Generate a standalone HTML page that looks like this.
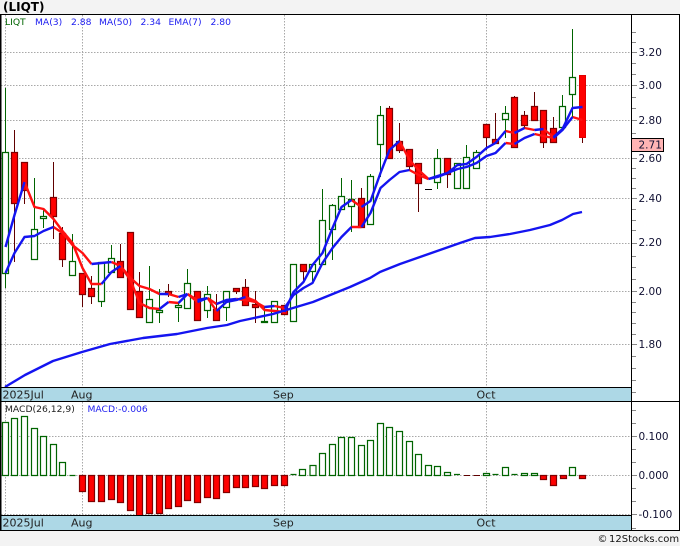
<!DOCTYPE html>
<html><head><meta charset="utf-8"><title>LIQT</title>
<style>
html,body{margin:0;padding:0;background:#f3f3f3}
svg{display:block}
text{font-family:"DejaVu Sans","Liberation Sans",sans-serif}
</style></head>
<body>
<svg xmlns="http://www.w3.org/2000/svg" width="680" height="546" viewBox="0 0 680 546">
<rect width="680" height="546" fill="#f3f3f3"/>
<rect x="0" y="14" width="680" height="517" fill="#fff"/>
<!-- grid -->
<path fill="none" stroke="#a8a8a8" stroke-dasharray="1.5 1.5" d="M1 52.5H631M1 85.5H631M1 120.5H631M1 158.5H631M1 198.5H631M1 243.5H631M1 291.5H631M1 344.5H631M5.5 15V387M82.5 15V387M284.5 15V387M486.5 15V387M1 436.5H631M1 475.5H631M1 514.5H631M5.5 402V515M82.5 402V515M284.5 402V515M486.5 402V515"/>
<!-- wicks -->
<path fill="none" stroke="#006400" d="M5.5 88V288M34.5 178V259M43.5 209V228M72.5 234V261M101.5 262V307M111.5 245V272M149.5 266V322M159.5 289V323M178.5 303V322M187.5 269V308M207.5 286V318M226.5 291V321M264.5 307V323M312.5 264V281M322.5 189V264M332.5 204V260M341.5 178V209M351.5 180V232M370.5 174V224M380.5 106V177M437.5 149V189M466.5 145V157M476.5 150V168M505.5 106V138M562.5 95V127M572.5 29V117"/>
<path fill="none" stroke="#600000" d="M14.5 130V262M24.5 162V204M53.5 162V239M62.5 227V267M82.5 273V307M91.5 276V304M120.5 244V277M139.5 272V317M168.5 284V297M216.5 294V320M236.5 288V294M245.5 279V305M255.5 291V323M303.5 264V282M361.5 188V227M389.5 106V158M399.5 123V153M409.5 149V171M418.5 163V212M447.5 158V188M486.5 124V150M495.5 113V143M514.5 96V147M524.5 111V128M534.5 92V106M543.5 110V148M553.5 117V142M582.5 75V143"/>
<!-- green bodies -->
<path fill="#fff" stroke="#006400" stroke-width="1.2" d="M2.5 152.5h6V273.5h-6zM31.5 229.5h6V259.5h-6zM40.5 216.5h6V218.5h-6zM69.5 261.5h6V275.5h-6zM98.5 262.5h6V301.5h-6zM108.5 258.5h6V272.5h-6zM146.5 299.5h6V322.5h-6zM156.5 310.5h6V312.5h-6zM175.5 305.5h6V307.5h-6zM184.5 283.5h6V308.5h-6zM204.5 294.5h6V310.5h-6zM223.5 291.5h6V307.5h-6zM261.5 321.5h6V322.5h-6zM271.5 301.5h6V322.5h-6zM290.5 264.5h6V321.5h-6zM309.5 264.5h6V271.5h-6zM319.5 220.5h6V264.5h-6zM329.5 205.5h6V229.5h-6zM338.5 196.5h6V209.5h-6zM348.5 199.5h6V206.5h-6zM367.5 176.5h6V224.5h-6zM377.5 115.5h6V144.5h-6zM434.5 158.5h6V182.5h-6zM454.5 163.5h6V188.5h-6zM463.5 157.5h6V188.5h-6zM473.5 152.5h6V168.5h-6zM502.5 113.5h6V119.5h-6zM559.5 106.5h6V127.5h-6zM569.5 77.5h6V94.5h-6z"/>
<!-- red bodies -->
<path fill="#f00" stroke="#800000" stroke-width="1.2" d="M11.5 152.5h6V203.5h-6zM21.5 162.5h6V190.5h-6zM50.5 197.5h6V216.5h-6zM59.5 233.5h6V259.5h-6zM79.5 273.5h6V294.5h-6zM88.5 288.5h6V296.5h-6zM117.5 261.5h6V277.5h-6zM127.5 232.5h6V309.5h-6zM136.5 291.5h6V317.5h-6zM165.5 291.5h6V294.5h-6zM194.5 291.5h6V320.5h-6zM213.5 309.5h6V320.5h-6zM233.5 288.5h6V291.5h-6zM242.5 287.5h6V305.5h-6zM252.5 304.5h6V307.5h-6zM281.5 305.5h6V314.5h-6zM300.5 264.5h6V271.5h-6zM358.5 198.5h6V227.5h-6zM386.5 108.5h6V158.5h-6zM396.5 141.5h6V150.5h-6zM406.5 149.5h6V166.5h-6zM415.5 163.5h6V183.5h-6zM444.5 158.5h6V174.5h-6zM483.5 124.5h6V137.5h-6zM492.5 139.5h6V143.5h-6zM511.5 97.5h6V147.5h-6zM521.5 115.5h6V125.5h-6zM531.5 106.5h6V120.5h-6zM540.5 110.5h6V142.5h-6zM550.5 128.5h6V142.5h-6z"/>
<path fill="#f00" stroke="#e00000" d="M579.5 75.5h6V137.5h-6z"/>
<path fill="none" stroke="#000" d="M425 189.5H432"/>
<!-- MA lines -->
<g fill="none" stroke-width="2.4" stroke-linejoin="round">
<path stroke="#ff1010" d="M53.5 227L62.5 233L72.5 245L82.5 253L91.5 264M111.5 262L120.5 266L130.5 278L139.5 286L149.5 289L159.5 294M168.5 294L178.5 297M187.5 294L197.5 300M207.5 298L216.5 304M236.5 299L245.5 300L255.5 302L264.5 307M274.5 306L284.5 308M351.5 227L361.5 227M409.5 170L418.5 175L428.5 179M505.5 143L514.5 144M534.5 134L543.5 136L553.5 138M572.5 117L582.5 120"/>
<path stroke="#ff1010" d="M24.5 182L34.5 207L43.5 209L53.5 219L62.5 231L72.5 243L82.5 268L91.5 284L101.5 284M120.5 266L130.5 280L139.5 303L149.5 308L159.5 309M168.5 302L178.5 303M187.5 294L197.5 302M207.5 298L216.5 311M245.5 297L255.5 301L264.5 310L274.5 311L284.5 312M351.5 200L361.5 207M399.5 141L409.5 160L418.5 170L428.5 179M505.5 131L514.5 133M524.5 128L534.5 130M543.5 129L553.5 137"/>
<path stroke="#1414f0" d="M5.5 273L14.5 253L24.5 237L34.5 236L43.5 231L53.5 227M91.5 264L101.5 263L111.5 262M159.5 294L168.5 294M178.5 297L187.5 294M197.5 300L207.5 298M216.5 304L226.5 300L236.5 299M264.5 307L274.5 306M284.5 308L293.5 295L303.5 288L312.5 283L322.5 263L332.5 248L341.5 237L351.5 227M361.5 227L370.5 213L380.5 188L389.5 180L399.5 172L409.5 170M428.5 179L437.5 176L447.5 173L457.5 169L466.5 167L476.5 163L486.5 156L495.5 153L505.5 143M514.5 144L524.5 138L534.5 134M553.5 138L562.5 130L572.5 117"/>
<path stroke="#1414f0" d="M5.5 247L14.5 215L24.5 182M101.5 284L111.5 272L120.5 266M159.5 309L168.5 302M178.5 303L187.5 294M197.5 302L207.5 298M216.5 311L226.5 302L236.5 300L245.5 297M284.5 312L293.5 292L303.5 282L312.5 265L322.5 253L332.5 228L341.5 207L351.5 200M361.5 207L370.5 201L380.5 173L389.5 150L399.5 141M428.5 179L437.5 177L447.5 173L457.5 165L466.5 164L476.5 157L486.5 148L495.5 143L505.5 131M514.5 133L524.5 128M534.5 130L543.5 129M553.5 137L562.5 129L572.5 108L582.5 107"/>
<path stroke="#1414f0" d="M5 387L25 375L53 361L82 352L110 344L143 338L177 334L207 328L227 325L240 321L273 314L313 302L350 287L370 278L380 272L400 264L440 250L460 243L475 238L490 237L510 234L530 230L550 225L562 220L573 214L582 212"/>
</g>
<!-- MACD bars -->
<clipPath id="m"><rect x="1" y="402" width="630" height="113"/></clipPath>
<g clip-path="url(#m)">
<path fill="#fff" stroke="#006400" stroke-width="1.2" d="M2.5 422.5h6V475.5h-6zM11.5 418.5h6V475.5h-6zM21.5 416.5h6V475.5h-6zM31.5 428.5h6V475.5h-6zM40.5 436.5h6V475.5h-6zM50.5 444.5h6V475.5h-6zM59.5 462.5h6V475.5h-6zM69.5 475.5h6M290.5 474.5h6M299.5 469.5h6V475.5h-6zM310 465.5h6V475.5h-6zM319.5 453.5h6V475.5h-6zM329.5 444.5h6V475.5h-6zM338.5 437.5h6V475.5h-6zM348.5 437.5h6V475.5h-6zM358.5 445.5h6V475.5h-6zM367.5 440.5h6V475.5h-6zM377.5 423.5h6V475.5h-6zM386.5 427.5h6V475.5h-6zM396.5 431.5h6V475.5h-6zM406.5 441.5h6V475.5h-6zM415.5 454.5h6V475.5h-6zM425.5 465.5h6V475.5h-6zM434.5 466.5h6V475.5h-6zM444.5 472.5h6V475.5h-6zM454 474.5h6M483.5 473.5h6V475.5h-6zM492.5 474.5h6M502.5 467.5h6V475.5h-6zM511.5 474.5h6M521.5 473.5h6V475.5h-6zM531.5 473.5h6V475.5h-6zM569.5 467.5h6V475.5h-6z"/>
<path fill="#f00" stroke="#800000" stroke-width="1.2" d="M79.5 475.5h6V491.5h-6zM88.5 475.5h6V501.5h-6zM98.5 475.5h6V501.5h-6zM108.5 475.5h6V499.5h-6zM117.5 475.5h6V502.5h-6zM127.5 475.5h6V510.5h-6zM136.5 475.5h6V518.5h-6zM146.5 475.5h6V513.5h-6zM156.5 475.5h6V513.5h-6zM165.5 475.5h6V508.5h-6zM175.5 475.5h6V506.5h-6zM184.5 475.5h6V500.5h-6zM194.5 475.5h6V502.5h-6zM204.5 475.5h6V497.5h-6zM213.5 475.5h6V498.5h-6zM223.5 475.5h6V492.5h-6zM233.5 475.5h6V487.5h-6zM242.5 475.5h6V487.5h-6zM252.5 475.5h6V486.5h-6zM261.5 475.5h6V488.5h-6zM271.5 475.5h6V485.5h-6zM281.5 475.5h6V485.5h-6zM540.5 475.5h6V479.5h-6zM550.5 475.5h6V485.5h-6zM560.5 475.5h6V478.5h-6zM579.5 475.5h6V478.5h-6z"/>
<path fill="none" stroke="#600000" d="M464 475.5H470M473.5 475.5H480"/>
</g>
<!-- bands -->
<rect x="0.5" y="387.5" width="631" height="14" fill="#add8e6" stroke="#000"/>
<rect x="0.5" y="515.5" width="631" height="15" fill="#add8e6" stroke="#000"/>
<!-- ticks -->
<path fill="none" stroke="#888" d="M632 32.5h4M632 42.5h4M632 52.5h5M632 63.5h4M632 74.5h4M632 85.5h5M632 97.5h4M632 108.5h4M632 120.5h5M632 133.5h4M632 158.5h5M632 168.5h4M632 178.5h4M632 188.5h4M632 198.5h5M632 209.5h4M632 220.5h4M632 230.5h4M632 243.5h5M632 256.5h4M632 267.5h4M632 279.5h4M632 291.5h5M632 302.5h4M632 312.5h4M632 323.5h4M632 334.5h4M632 344.5h5M632 356.5h4M632 368.5h4M632 380.5h4M632 392.5h4M632 410.5h4M632 423.5h4M632 436.5h5M632 449.5h4M632 462.5h4M632 475.5h5M632 488.5h4M632 501.5h4M632 514.5h5M632 528.5h4"/>
<!-- frame -->
<path fill="none" stroke="#000" d="M0 14.5H680M631.5 14V531M679.5 14V531M0 401.5H680M0 530.5H680"/>
<rect x="0" y="14" width="1.5" height="517" fill="#000"/>
<!-- price box -->
<rect x="631.5" y="138.5" width="32" height="13" fill="#ffb4b4" stroke="#000"/>
<!-- text -->
<text x="3" y="11" font-size="12" font-weight="bold" fill="#000">(LIQT)</text>
<g font-size="9.2">
<text x="5" y="25" fill="#006400">LIQT</text>
<g fill="#2020f0">
<text x="35" y="25">MA(3)</text><text x="71" y="25">2.88</text>
<text x="99" y="25">MA(50)</text><text x="140.5" y="25">2.34</text>
<text x="168.5" y="25">EMA(7)</text><text x="210.5" y="25">2.80</text>
<text x="87.5" y="412">MACD:-0.006</text>
</g>
<text x="5" y="412" fill="#222">MACD(26,12,9)</text>
</g>
<g font-size="10.5" fill="#111133">
<text x="638.5" y="56">3.20</text>
<text x="638.5" y="89">3.00</text>
<text x="638.5" y="124">2.80</text>
<text x="638.5" y="148.5">2.71</text>
<text x="638.5" y="162">2.60</text>
<text x="638.5" y="202">2.40</text>
<text x="638.5" y="246">2.20</text>
<text x="638.5" y="295">2.00</text>
<text x="638.5" y="348">1.80</text>
<text x="638.5" y="440">0.100</text>
<text x="638.5" y="479">0.000</text>
<text x="638.5" y="518">-0.100</text>
</g>
<g font-size="11" fill="#222">
<text x="2.5" y="398.5">2025Jul</text><text x="71" y="398.5">Aug</text><text x="273" y="398.5">Sep</text><text x="476.5" y="398.5">Oct</text>
<text x="2.5" y="526.5">2025Jul</text><text x="71" y="526.5">Aug</text><text x="273" y="526.5">Sep</text><text x="476.5" y="526.5">Oct</text>
</g>
<text x="597.5" y="542" font-size="10" fill="#111">©</text>
<text x="609" y="542" font-size="10" fill="#111">12Stocks.com</text>
</svg>
</body></html>
